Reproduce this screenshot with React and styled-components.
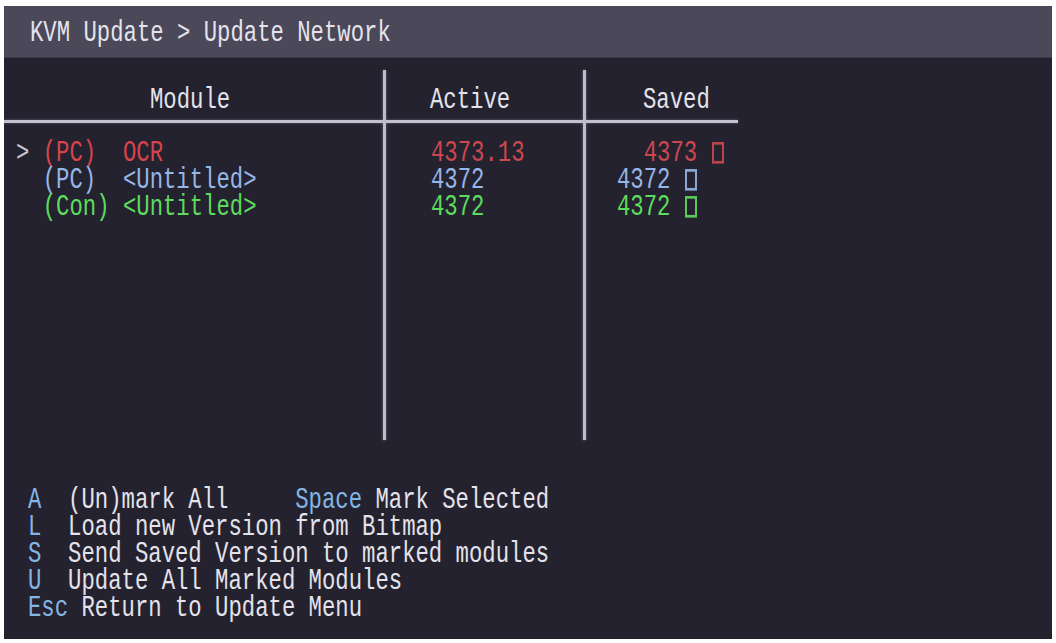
import React from 'react';
import styled, { createGlobalStyle } from 'styled-components';

const GlobalStyle = createGlobalStyle`
  html, body {
    margin: 0;
    padding: 0;
    background: #fff;
  }
  body {
    font-family: "Liberation Mono", "DejaVu Sans Mono", monospace;
  }
`;

const tones = {
  text: '#e4e3ec',
  red: '#d9434b',
  redDim: '#cc484e',
  blue: '#95b6e8',
  green: '#5cdc5c',
  key: '#84b6e4',
  chevron: '#c9c8d4',
};

const Screen = styled.div`
  margin: 6px 4px 0 4px;
  width: 1048px;
  height: 633px;
  background: #25222f;
  color: ${tones.text};
  font-size: 22.27px;
  display: flex;
  flex-direction: column;
  overflow: hidden;
`;

const TitleBar = styled.div`
  height: 52px;
  background: #4a4859;
  border-bottom: 1px solid #3a3848;
  box-sizing: border-box;
  padding: 0 0 0 26px;
  display: flex;
  align-items: center;
`;

// terminal font is tall and narrow: stretch each text row vertically
const Line = styled.div`
  height: 27px;
  line-height: 27px;
  white-space: pre;
  transform: translateY(2px) scaleY(1.35);
`;

const Txt = styled.span`
  color: ${(p) => tones[p.$tone] || tones.text};
`;

const Mark = styled.span`
  display: inline-block;
  box-sizing: border-box;
  width: 12px;
  height: 16px;
  margin-left: 1px;
  border: 2px solid ${(p) => tones[p.$tone]};
  vertical-align: -2px;
  opacity: 0.9;
`;

const Table = styled.div`
  margin-top: 12px;
  display: grid;
  grid-template-columns: 379px 3px 197px 3px 152px;
  grid-template-rows: 50px 3px 317px;
  width: 734px;
`;

const HeadCell = styled.div`
  grid-row: 1;
  grid-column: ${(p) => p.$col};
  align-self: end;
  padding: 0 0 8px ${(p) => p.$indent}px;
`;

const BodyCell = styled.div`
  grid-row: 3;
  grid-column: ${(p) => p.$col};
  padding: 15px 0 0 ${(p) => p.$indent}px;
`;

const VRule = styled.div`
  grid-row: 1 / -1;
  grid-column: ${(p) => p.$col};
  background: #bdbccb;
  box-shadow: 0 0 3px rgba(180, 178, 200, 0.5);
`;

const HRule = styled.div`
  grid-row: 2;
  grid-column: 1 / -1;
  background: #c2c1cf;
  box-shadow: 0 0 3px rgba(180, 178, 200, 0.4);
`;

const Help = styled.div`
  margin-top: 45px;
  padding-left: 24px;
`;

const rows = [
  { tone: 'red', active: 'redDim', sel: true, type: '(PC) ', name: 'OCR', act: '4373.13', saved: '  4373' },
  { tone: 'blue', active: 'blue', type: '(PC) ', name: '<Untitled>', act: '4372', saved: '4372' },
  { tone: 'green', active: 'green', type: '(Con)', name: '<Untitled>', act: '4372', saved: '4372' },
];

const help = [
  { key: 'A', label: '  (Un)mark All     ', extraKey: 'Space', extra: ' Mark Selected' },
  { key: 'L', label: '  Load new Version from Bitmap' },
  { key: 'S', label: '  Send Saved Version to marked modules' },
  { key: 'U', label: '  Update All Marked Modules' },
  { key: 'Esc', label: ' Return to Update Menu' },
];

export default function App() {
  return (
    <>
      <GlobalStyle />
      <Screen>
        <TitleBar>
          <Line>KVM Update &gt; Update Network</Line>
        </TitleBar>

        <Table>
          <HeadCell $col={1} $indent={146}>
            <Line>Module</Line>
          </HeadCell>
          <HeadCell $col={3} $indent={44}>
            <Line>Active</Line>
          </HeadCell>
          <HeadCell $col={5} $indent={57}>
            <Line>Saved</Line>
          </HeadCell>

          <HRule />
          <VRule $col={2} />
          <VRule $col={4} />

          <BodyCell $col={1} $indent={12}>
            {rows.map((r, i) => (
              <Line key={i}>
                <Txt $tone="chevron">{r.sel ? '> ' : '  '}</Txt>
                <Txt $tone={r.tone}>{r.type + ' ' + r.name}</Txt>
              </Line>
            ))}
          </BodyCell>
          <BodyCell $col={3} $indent={45}>
            {rows.map((r, i) => (
              <Line key={i}>
                <Txt $tone={r.active}>{r.act}</Txt>
              </Line>
            ))}
          </BodyCell>
          <BodyCell $col={5} $indent={31}>
            {rows.map((r, i) => (
              <Line key={i}>
                <Txt $tone={r.active}>{r.saved + ' '}</Txt>
                <Mark $tone={r.active} />
              </Line>
            ))}
          </BodyCell>
        </Table>

        <Help>
          {help.map((h) => (
            <Line key={h.key}>
              <Txt $tone="key">{h.key}</Txt>
              <Txt>{h.label}</Txt>
              {h.extraKey && <Txt $tone="key">{h.extraKey}</Txt>}
              {h.extra && <Txt>{h.extra}</Txt>}
            </Line>
          ))}
        </Help>
      </Screen>
    </>
  );
}
